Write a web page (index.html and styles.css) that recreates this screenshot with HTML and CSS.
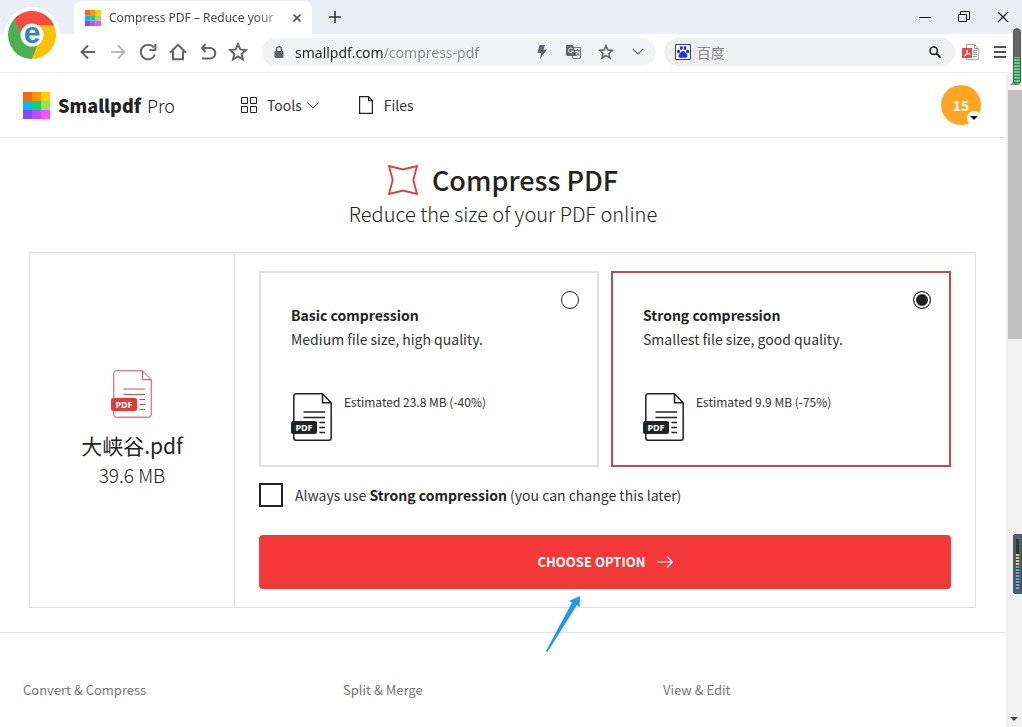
FILE: index.html
```html
<!DOCTYPE html>
<html lang="en">
<head>
<meta charset="utf-8">
<title>Compress PDF – Reduce your PDF online</title>
<link rel="stylesheet" href="styles.css">
</head>
<body>
<svg class="defs" aria-hidden="true">
  <symbol id="mark" viewBox="0 0 27 27">
    <path fill="#f26a0a" d="M0 0h9v9H0z"/><path fill="#ff9500" d="M9 0h9v9H9z"/><path fill="#ffd100" d="M18 0h9v9h-9z"/>
    <path fill="#00b8f5" d="M0 9h9v9H0z"/><path fill="#0ed36e" d="M9 9h9v9H9z"/><path fill="#8ce65a" d="M18 9h9v9h-9z"/>
    <path fill="#8a49f7" d="M0 18h9v9H0z"/><path fill="#c24df8" d="M9 18h9v9H9z"/><path fill="#fb4ff8" d="M18 18h9v9h-9z"/>
  </symbol>
  <symbol id="star" viewBox="0 0 20 20">
    <path fill="none" stroke="currentColor" stroke-width="2" d="M10 2.2l2.3 5.2 5.6.6-4.2 3.8 1.2 5.6-4.9-2.9-4.9 2.9 1.2-5.6L2.1 8l5.600-.6z"/>
  </symbol>
  <symbol id="pdf-file" viewBox="0 0 42 48">
    <path fill="none" stroke="currentColor" d="M31.500.8H5A2.200 2.200 0 0 0 2.800 3v42A2.200 2.200 0 0 0 5 47.200h33a2.200 2.200 0 0 0 2.200-2.200V9.700L31.500.8v8.900h8.700M12.500 19h21.500M12.500 24.500h21.500M28.500 29.500h5.500M28.500 34.500h5.500M28.500 39.500h5.500"/>
    <rect y="28" width="26" height="13" rx="2" fill="var(--badge)"/>
  </symbol>
</svg>

<header class="browser">
  <div class="tabstrip">
    <div class="tab">
      <svg class="favicon"><use href="#mark"/></svg>
      <span class="tab-title">Compress PDF – Reduce your</span>
      <button class="tab-close" aria-label="Close tab"><svg width="8" height="8" viewBox="0 0 8 8"><path d="M.5.5l7 7M7.500.5l-7 7" stroke="#555" stroke-width="1.600"/></svg></button>
    </div>
    <button class="icon-btn new-tab" aria-label="New tab"><svg width="12" height="12" viewBox="0 0 12 12"><path d="M6 0v12M0 6h12" stroke="#333" stroke-width="1.600"/></svg></button>
    <div class="window-controls">
      <button aria-label="Minimize"><svg width="12" height="12"><path d="M0 6.500h12" stroke="#111"/></svg></button>
      <button aria-label="Restore"><svg width="12" height="12" fill="none" stroke="#111"><path d="M.5 3.500h8v7h-8zM2.500 3V.5h9v8H9"/></svg></button>
      <button aria-label="Close"><svg width="12" height="12"><path d="M1 1l10 10M11 1L1 11" stroke="#111" stroke-width="1.200"/></svg></button>
    </div>
  </div>
  <div class="toolbar">
    <nav class="nav-buttons" aria-label="Browser navigation">
      <button class="icon-btn" aria-label="Back"><svg width="18" height="18" viewBox="0 0 18 18" class="line"><path d="M16 9H3M9 2.500L2.500 9 9 15.500"/></svg></button>
      <button class="icon-btn faded" aria-label="Forward"><svg width="18" height="18" viewBox="0 0 18 18" class="line"><path d="M2 9h13M9 2.500L15.500 9 9 15.500"/></svg></button>
      <button class="icon-btn" aria-label="Reload"><svg width="18" height="18" viewBox="0 0 18 18" class="line"><path d="M16 11.500A7.300 7.300 0 1 1 14.800 4.400M16.400 1v6h-6"/></svg></button>
      <button class="icon-btn" aria-label="Home"><svg width="18" height="18" viewBox="0 0 18 18" class="line"><path d="M1 9.700l8-8 8 8M4 8v8.300h10V8"/></svg></button>
      <button class="icon-btn" aria-label="Undo"><svg width="18" height="18" viewBox="0 0 18 18" class="line"><path d="M6.500 1L3 5l3.500 4M3 5h8a5 5 0 0 1 0 10.500H3"/></svg></button>
      <button class="icon-btn" aria-label="Bookmark"><svg width="20" height="20"><use href="#star"/></svg></button>
    </nav>
    <div class="field address">
      <svg width="10" height="12" viewBox="0 0 10 12"><rect y="5" x="0.500" width="9" height="7" rx="1" fill="#5f6368"/><path d="M2.500 5V3.200a2.500 2.500 0 0 1 5 0V5" fill="none" stroke="#5f6368" stroke-width="1.400"/></svg>
      <input class="url" type="text" aria-label="Address" value="smallpdf.com/compress-pdf">
      <button class="icon-btn" aria-label="Speed mode"><svg width="10" height="14" viewBox="0 0 10 14"><path fill="#5f6368" d="M2.500 0H8L6.500 4.500H10L3 14l1.200-6H.5z"/></svg></button>
      <button class="icon-btn" aria-label="Translate"><svg width="15" height="14" viewBox="0 0 15 14"><path fill="#fff" stroke="#777" d="M4.500 2.500h10v11H7z"/><path fill="#666" d="M0 0h7l4 11H1a1 1 0 0 1-1-1z"/><path d="M9.500 5.500H14M11.500 4v1.500M10.500 7l3 4M13 6c0 2-1 4-3 5" fill="none" stroke="#777"/><path d="M6.800 4.200a2.300 2.300 0 1 0 .2 2H5" fill="none" stroke="#fff"/></svg></button>
      <button class="icon-btn" aria-label="Favourite"><svg width="16" height="16"><use href="#star"/></svg></button>
      <button class="icon-btn" aria-label="Address history"><svg width="12" height="8" viewBox="0 0 12 8"><path d="M1 1l5 5 5-5" fill="none" stroke="#777" stroke-width="1.300"/></svg></button>
    </div>
    <div class="field search">
      <svg width="16" height="16" viewBox="0 0 16 16"><path fill="#fff" stroke="#3339b8" d="M.5.5h15v15H.5z"/><g fill="#2b32d9"><ellipse cx="3.500" cy="7.500" rx="1.500" ry="2"/><ellipse cx="6.300" cy="4" rx="1.500" ry="2"/><ellipse cx="10" cy="4" rx="1.500" ry="2"/><ellipse cx="12.600" cy="7.500" rx="1.500" ry="2"/><path d="M8 7c2 0 2.500 2 4 3.500 1.500 2-.5 4-2.500 3.200H6.500C4.500 14.500 2.500 12.500 4 10.500 5.500 9 6 7 8 7z"/></g></svg>
      <input type="search" aria-label="Search" placeholder="百度">
      <button class="icon-btn" aria-label="Search"><svg width="12" height="12" viewBox="0 0 12 12"><circle cx="4.700" cy="4.700" r="3.700" fill="none" stroke="#222" stroke-width="1.600"/><path d="M7.500 7.500l4 4" stroke="#222" stroke-width="1.800"/></svg></button>
    </div>
    <button class="icon-btn pdf-tool" aria-label="PDF tools"><svg width="17" height="16" viewBox="0 0 17 16"><path d="M4.500.5h8l4 4v11h-12z" fill="#fff" stroke="#aaa"/><path d="M12.500.5v4h4M11 6.500h4M11 8.500h4M11 10.500h4M11 12.500h4" stroke="#999" fill="none"/><path fill="#df4a4a" d="M0 4h10v10H0z"/><path d="M2 12c3-1 4-5 3-6-1 0-.5 4 3.500 4M2 12c1-2 4-2 6-2" stroke="#fff" fill="none" stroke-width=".9"/></svg></button>
    <button class="icon-btn menu" aria-label="Menu"><svg width="12" height="12"><path d="M0 1h12M0 6h12M0 11h12" stroke="#555" stroke-width="2"/></svg></button>
  </div>
  <svg class="browser-logo" viewBox="0 0 56 56" aria-hidden="true">
    <circle cx="28" cy="28" r="28" fill="#fff"/>
    <path fill="#4caf50" d="M28 28L9.800 12.400A24 24 0 0 0 28 52l8-16z"/>
    <path fill="#ffc107" d="M28 18.500h22A24 24 0 0 1 28 52l7-18z"/>
    <path fill="#fb4b3f" d="M9.800 12.400A24 24 0 0 1 50.100 18.500H28a10 10 0 0 0-10.500 8z"/>
    <circle cx="28" cy="28" r="11.500" fill="#fff"/>
    <text x="28" y="36" text-anchor="middle" class="logo-letter">e</text>
  </svg>
</header>

<div class="viewport">
  <div class="page">
    <header class="site-header">
      <a class="brand" href="#"><svg class="brand-mark"><use href="#mark"/></svg><b>Smallpdf</b><span>Pro</span></a>
      <nav class="site-nav" aria-label="Main">
        <button class="nav-item"><svg width="16" height="16" fill="none" stroke="#222"><path d="M.5.5h6v6h-6zM9.500.5h6v6h-6zM.5 9.500h6v6h-6zM9.500 9.500h6v6h-6z"/></svg>Tools<svg class="chevron" width="12" height="7" fill="none" stroke="#333"><path d="M.5.8l5.500 5 5.500-5"/></svg></button>
        <a class="nav-item files" href="#"><svg width="14" height="18" fill="none" stroke="#222" stroke-width="1.200"><path d="M.6.6h9l3.800 4v12.800H.6zM9.600.6v4h3.800"/></svg>Files</a>
      </nav>
      <button class="avatar" aria-label="Account 15">15<span class="avatar-caret"><svg width="8" height="4"><path d="M0 0h8L4 4z" fill="#111"/></svg></span></button>
    </header>

    <main>
      <div class="heading">
        <div class="title-row">
          <svg width="30" height="30" viewBox="0 0 30 30"><path d="M1 1l14 3.500L29 1l-3.700 14L29 29l-14-3.500L1 29l3.700-14z" fill="none" stroke="#d94343" stroke-width="1.900"/></svg>
          <h1>Compress PDF</h1>
        </div>
        <p>Reduce the size of your PDF online</p>
      </div>

      <form class="panel">
        <aside class="file">
          <svg class="file-icon red" width="42" height="48"><use href="#pdf-file"/><text x="13" y="38" text-anchor="middle" class="badge-text">PDF</text></svg>
          <span class="file-name">大峡谷.pdf</span>
          <span class="file-size">39.6 MB</span>
        </aside>
        <div class="settings">
          <div class="options">
            <label class="option">
              <span class="option-text"><b>Basic compression</b><span>Medium file size, high quality.</span></span>
              <input type="radio" name="level">
              <span class="estimate"><svg class="file-icon dark" width="42" height="48"><use href="#pdf-file"/><text x="13" y="38" text-anchor="middle" class="badge-text">PDF</text></svg><span>Estimated 23.8 MB (-40%)</span></span>
            </label>
            <label class="option">
              <span class="option-text"><b>Strong compression</b><span>Smallest file size, good quality.</span></span>
              <input type="radio" name="level" checked>
              <span class="estimate"><svg class="file-icon dark" width="42" height="48"><use href="#pdf-file"/><text x="13" y="38" text-anchor="middle" class="badge-text">PDF</text></svg><span>Estimated 9.9 MB (-75%)</span></span>
            </label>
          </div>
          <label class="always"><input type="checkbox"><span>Always use <b>Strong compression</b> (you can change this later)</span></label>
          <button type="button" class="choose">CHOOSE OPTION<svg width="16" height="12" fill="none" stroke="#fff" stroke-width="1.200"><path d="M0 6h15M10 .5L15.300 6 10 11.500"/></svg></button>
        </div>
        <svg class="pointer" width="36" height="58" viewBox="0 0 36 58" aria-hidden="true"><path fill="#2196f3" d="M34 1L23 6l3 1.500L0 56l1.500 1L31 10l2.500 2.500z"/></svg>
      </form>
    </main>

    <footer class="site-footer">
      <span>Convert &amp; Compress</span><span>Split &amp; Merge</span><span>View &amp; Edit</span>
    </footer>
  </div>
  <div class="scrollbar" aria-hidden="true">
    <svg width="8" height="4"><path d="M0 4l4-4 4 4z" fill="#999"/></svg>
    <div class="track"><div class="thumb"></div></div>
    <svg width="8" height="4"><path d="M0 0h8L4 4z" fill="#444"/></svg>
  </div>
</div>
<div class="meter meter-green" aria-hidden="true"></div>
<div class="meter meter-blue" aria-hidden="true"><i></i></div>
</body>
</html>
```
FILE: styles.css
```css
* { box-sizing: border-box; }
body {
  margin: 0;
  min-height: 100vh;
  display: flex;
  flex-direction: column;
  position: relative;
  overflow-x: hidden;
  background: #fff;
  color: #222;
  font: 14px/24px "Noto Sans CJK SC", sans-serif;
}
button, input { font: inherit; color: inherit; margin: 0; padding: 0; border: 0; background: none; outline: 0; }
button { display: flex; align-items: center; justify-content: center; cursor: pointer; }
a { color: inherit; text-decoration: none; }
svg { flex: none; display: block; }
.defs { position: absolute; width: 0; height: 0; }

/* Browser frame */
.browser { position: relative; border-bottom: 1px solid #eee; }
.tabstrip { display: flex; align-items: flex-end; height: 34px; padding-left: 74px; background: #ebeef7; }
.tab { display: flex; align-items: center; width: 238px; height: 33px; padding: 0 10px 0 11px; background: #fff; border-radius: 8px 8px 0 0; }
.favicon { width: 16px; height: 16px; margin-right: 8px; }
.tab-title {
  flex: 1;
  white-space: nowrap;
  font: 12px/20px "Noto Sans", sans-serif;
  color: #444;
  mask-image: linear-gradient(90deg, #000 145px, rgba(0, 0, 0, .4) 170px);
}
.tab-close { width: 10px; height: 16px; margin-left: 8px; }
.new-tab { width: 46px; height: 34px; }
.window-controls { display: flex; margin-left: auto; }
.window-controls button { width: 39px; height: 34px; }
.toolbar { display: flex; align-items: center; height: 38px; padding: 0 0 2px 73px; }
.icon-btn { flex: none; color: #666; }
.nav-buttons { display: flex; }
.nav-buttons .icon-btn { width: 30px; height: 28px; }
.faded { opacity: .45; }
.line { fill: none; stroke: currentColor; stroke-width: 2; }
.field { display: flex; align-items: center; height: 28px; border-radius: 14px; background: #f1f3f4; }
.field input { flex: 1; min-width: 0; height: 28px; font-size: 14px; }
.address { flex: 393 1 0; margin-left: 9px; padding: 0 2px 0 12px; }
.address .icon-btn { width: 32px; height: 28px; }
.address .url {
  margin-left: 11px;
  font-family: "Noto Sans", sans-serif;
  background: linear-gradient(90deg, #222 88px, #888c91 88px);
  background-clip: text;
  -webkit-background-clip: text;
  -webkit-text-fill-color: transparent;
}
.search { flex: 286 1 0; margin-left: 8px; padding: 0 4px 0 11px; background: #eff0f2; }
.search input { margin-left: 6px; }
.search input::placeholder { color: #888; opacity: 1; }
.search .icon-btn { width: 32px; height: 28px; }
.pdf-tool { width: 30px; height: 28px; }
.menu { width: 30px; height: 28px; margin-right: 7px; }
.browser-logo { position: absolute; left: 4px; top: 7px; width: 56px; height: 56px; }
.logo-letter { font: bold 30px "Liberation Sans", sans-serif; fill: #2789bd; }

/* Site */
.viewport { flex: 1; display: flex; }
.page { flex: 1; min-width: 0; display: flex; flex-direction: column; }
.site-header { display: flex; align-items: center; height: 65px; padding: 0 25px 0 23px; border-bottom: 1px solid #e3e3e3; }
.brand { display: flex; align-items: center; font-size: 18px; font-weight: 300; }
.brand-mark { width: 27px; height: 27px; margin-right: 8px; }
.brand b { margin-right: 6px; font-weight: 900; }
.site-nav { display: flex; margin-left: 66px; color: #333; }
.nav-item { display: flex; align-items: center; gap: 10px; }
.nav-item .chevron { margin-left: -5px; }
.files { margin-left: 40px; gap: 11px; }
.avatar { position: relative; width: 40px; height: 40px; margin-left: auto; border-radius: 50%; background: #ffa722; color: #fff; font-weight: 700; }
.avatar-caret { position: absolute; right: 0; bottom: 0; display: flex; align-items: center; justify-content: center; width: 14px; height: 14px; border-radius: 50%; background: #fff; }

.heading { display: flex; flex-direction: column; align-items: center; padding: 22px 0 24px; }
.title-row { display: flex; align-items: center; gap: 14px; height: 40px; }
.heading h1 { margin: 0; font-size: 27px; line-height: 40px; font-weight: 500; }
.heading p { margin: 0; font-size: 20px; line-height: 28px; font-weight: 300; }

.panel { position: relative; display: flex; margin: 0 30px 24px 29px; border: 1px solid #e0e0e0; }
.file { display: flex; flex-direction: column; align-items: center; justify-content: center; width: 205px; border-right: 1px solid #e0e0e0; }
.red { --badge: #e53935; color: #c0504f; stroke-width: 1; }
.dark { --badge: #222; color: #222; stroke-width: 1.5; }
.badge-text { font: 700 9px "Noto Sans", sans-serif; fill: #fff; stroke: none; }
.file-name { margin-top: 12px; font-size: 21px; line-height: 30px; }
.file-size { font-size: 19px; line-height: 30px; font-weight: 300; }
.settings { flex: 1; padding: 18px 24px; }
.options { display: grid; grid-template-columns: 1fr 1fr; gap: 12px; }
.option { display: grid; grid-template-columns: 1fr 18px; padding: 18px 18px 24px 30px; border: 2px solid #e0e0e0; }
.option:has(:checked) { border-color: #c14a4c; }
.option-text { display: flex; flex-direction: column; padding-top: 12px; }
.option-text span, .estimate > span, .always span { color: #333; }
.always b { color: #222; }
.option input { appearance: none; width: 18px; height: 18px; border: 1px solid #222; border-radius: 50%; background: #fff; }
.option input:checked { background: #222; box-shadow: inset 0 0 0 2px #fff; }
.estimate { display: flex; grid-column: 1 / -1; gap: 11px; margin-top: 42px; font-size: 12px; line-height: 18px; }
.always { display: flex; align-items: center; gap: 12px; margin-top: 16px; }
.always input { appearance: none; width: 24px; height: 24px; border: 2px solid #222; background: #fff; }
.choose { width: 100%; height: 54px; gap: 11px; margin-top: 28px; border-radius: 4px; background: #f43737; color: #fff; font-size: 13px; font-weight: 700; }
.pointer { position: absolute; left: 516px; bottom: -46px; }

.site-footer { display: grid; grid-template-columns: repeat(3, 1fr); flex: 1; padding: 45px 23px 24px; border-top: 1px solid #e3e3e3; font-size: 13px; color: #777; }

/* Scrollbar and overlay gauges */
.scrollbar { display: flex; flex-direction: column; align-items: center; width: 16px; padding: 8px 0 6px; background: #f1f1f1; }
.track { flex: 1; width: 100%; margin: 5px 0; padding-left: 2px; }
.thumb { height: 40%; background: #c1c1c1; }
.meter { position: absolute; border: 1px solid #4a545c; }
.meter-green { right: 1px; top: 28px; width: 8px; height: 57px; border-color: #555; border-radius: 4px; background: linear-gradient(#666 28px, transparent 28px), repeating-linear-gradient(#5fd08a 0 2px, #35834f 2px 3px); }
.meter-blue { right: 0; top: 534px; width: 9px; height: 60px; padding: 4px 2px; border-radius: 2px 0 0 2px; background: #555f69; }
.meter-blue i { display: block; height: 50px; background: repeating-linear-gradient(transparent 0 2px, #333c44 2px 3px), linear-gradient(#333 15px, #e2d75b 15px 27px, #5ab8dc 27px); }
```
